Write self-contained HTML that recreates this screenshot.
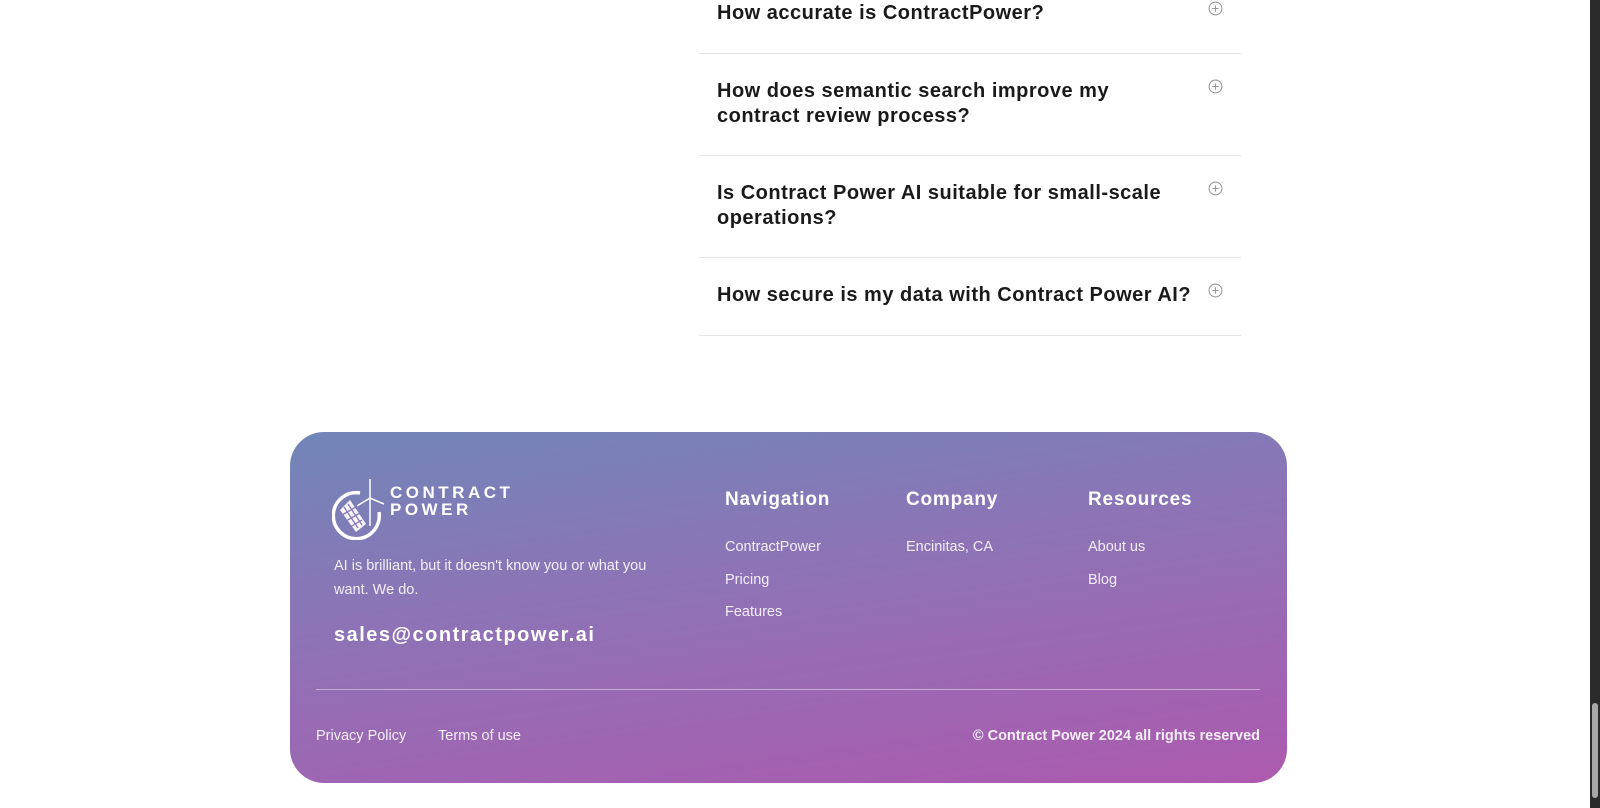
<!DOCTYPE html>
<html><head><meta charset="utf-8"><style>
*{margin:0;padding:0;box-sizing:border-box}
html,body{width:1600px;height:808px;overflow:hidden;background:#fff;font-family:"Liberation Sans",sans-serif}
.q{position:absolute;left:717px;font-size:20px;font-weight:bold;color:#1a1a1a;line-height:25px;letter-spacing:0.5px}
.hr{position:absolute;left:699px;width:542px;height:1px;background:#e6e6e6}
.pl{position:absolute;left:1208px;width:15px;height:15px}
.ft{position:absolute;left:290px;top:432px;width:997px;height:351px;border-radius:34px;background:linear-gradient(172deg,#7186b8 0%,#8f72b6 45%,#ad5aae 100%);color:#fff}
.ft .a{position:absolute}
.h{font-size:19px;font-weight:bold;top:57px;letter-spacing:0.8px}
.l{font-size:14.5px;color:#f3eef8}
.sb{position:absolute;left:1590px;top:0;width:10px;height:808px;background:#2b2b2b}
.th{position:absolute;left:1592px;top:703px;width:6px;height:95px;background:#a8a8a8;border-radius:3px}
</style></head><body>
<div class="q" style="top:1px">How accurate is ContractPower?</div>
<div class="hr" style="top:53px"></div>
<div class="q" style="top:79px">How does semantic search improve my<br>contract review process?</div>
<div class="hr" style="top:155px"></div>
<div class="q" style="top:181px">Is Contract Power AI suitable for small-scale<br>operations?</div>
<div class="hr" style="top:257px"></div>
<div class="q" style="top:283px">How secure is my data with Contract Power AI?</div>
<div class="hr" style="top:335px"></div>
<svg class="pl" style="top:1px" viewBox="0 0 14 14"><circle cx="7" cy="7" r="6" fill="none" stroke="#999" stroke-width="1"/><path d="M7 4v6M4 7h6" stroke="#999" stroke-width="1"/></svg>
<svg class="pl" style="top:79px" viewBox="0 0 14 14"><circle cx="7" cy="7" r="6" fill="none" stroke="#999" stroke-width="1"/><path d="M7 4v6M4 7h6" stroke="#999" stroke-width="1"/></svg>
<svg class="pl" style="top:181px" viewBox="0 0 14 14"><circle cx="7" cy="7" r="6" fill="none" stroke="#999" stroke-width="1"/><path d="M7 4v6M4 7h6" stroke="#999" stroke-width="1"/></svg>
<svg class="pl" style="top:283px" viewBox="0 0 14 14"><circle cx="7" cy="7" r="6" fill="none" stroke="#999" stroke-width="1"/><path d="M7 4v6M4 7h6" stroke="#999" stroke-width="1"/></svg>
<div class="ft">
 <svg class="a" style="left:42px;top:44px" width="56" height="64" viewBox="0 0 56 64">
  <path d="M28 17 A23 23 0 1 0 47 36" fill="none" stroke="#fff" stroke-width="3.5"/>
  <path d="M8 34 L18 24 L34 48 L24 56 Z" fill="#fff" opacity=".92"/>
  <path d="M12 31l14 21M16 28l14 21M10 39l14-8M14 45l14-8M18 51l12-7" stroke="#8a78b6" stroke-width="1.3"/>
  <path d="M38 3V50M38 22L25 30M38 22L52 28" stroke="#fff" stroke-width="1.5"/>
 </svg>
 <div class="a" style="left:100px;top:52px;font-size:17px;font-weight:bold;letter-spacing:3.5px;line-height:17px">CONTRACT<br>POWER</div>
 <div class="a l" style="left:44px;top:122px;line-height:24px">AI is brilliant, but it doesn't know you or what you<br>want. We do.</div>
 <div class="a" style="left:44px;top:192px;font-size:20px;font-weight:bold;letter-spacing:1.5px">sales@contractpower.ai</div>
 <div class="a h" style="left:435px">Navigation</div>
 <div class="a h" style="left:616px">Company</div>
 <div class="a h" style="left:798px">Resources</div>
 <div class="a l" style="left:435px;top:99px;line-height:32.5px">ContractPower<br>Pricing<br>Features</div>
 <div class="a l" style="left:616px;top:99px;line-height:32.5px">Encinitas, CA</div>
 <div class="a l" style="left:798px;top:99px;line-height:32.5px">About us<br>Blog</div>
 <div class="a" style="left:26px;top:257px;width:944px;height:1px;background:rgba(255,255,255,.45)"></div>
 <div class="a l" style="left:26px;top:296px;font-size:14.5px">Privacy Policy</div>
 <div class="a l" style="left:148px;top:296px;font-size:14.5px">Terms of use</div>
 <div class="a l" style="right:27px;top:296px;font-size:14.5px;font-weight:bold">© Contract Power 2024 all rights reserved</div>
</div>
<div class="sb"></div><div class="th"></div>
</body></html>
